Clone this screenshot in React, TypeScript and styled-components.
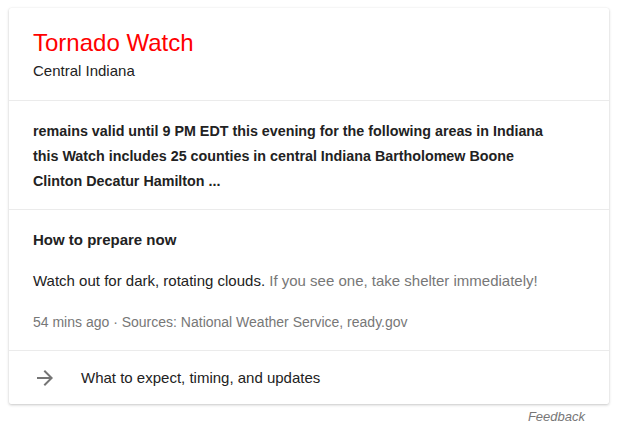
import React from "react";
import styled, { createGlobalStyle } from "styled-components";

const Global = createGlobalStyle`
  html, body { margin: 0; padding: 0; background: #fff; }
  body { font-family: "Liberation Sans", Arial, sans-serif; color: #222; }
`;

const Page = styled.div`
  padding: 8px 12px 0 9px;
`;

const Card = styled.div`
  width: 600px;
  background: #fff;
  border-radius: 2px;
  box-shadow: 0 1px 3px rgba(0, 0, 0, 0.22), 0 0 1px rgba(0, 0, 0, 0.08);
`;

const Section = styled.div<{ $pt: number; $pb: number }>`
  padding: ${(p) => p.$pt}px 24px ${(p) => p.$pb}px 24px;
  & + & {
    border-top: 1px solid #ebebeb;
  }
`;

const Title = styled.div`
  font-size: 24px;
  line-height: 32px;
  color: #ff0000;
`;

const Subtitle = styled.div`
  font-size: 15px;
  line-height: 20px;
  color: #222;
  margin-top: 2px;
`;

const BoldText = styled.div`
  max-width: 522px;
  font-size: 14.3px;
  line-height: 25px;
  font-weight: bold;
  color: #222;
`;

const Heading = styled.div`
  font-size: 15px;
  line-height: 20px;
  font-weight: bold;
  color: #222;
`;

const Body = styled.div`
  font-size: 15px;
  line-height: 20px;
  color: #222;
  margin-top: 21px;
`;

const Muted = styled.span`
  color: #777;
`;

const Meta = styled.div`
  font-size: 14px;
  line-height: 20px;
  color: #777;
  margin-top: 21px;
`;

const LinkRow = styled.div`
  display: flex;
  align-items: center;
  gap: 24px;
  padding: 15px 24px 14px 24px;
  border-top: 1px solid #ebebeb;
  font-size: 15px;
  line-height: 20px;
  color: #222;
`;

const IconBox = styled.span`
  display: flex;
  width: 24px;
  height: 24px;
  color: #757575;
`;

const Footer = styled.div`
  display: flex;
  justify-content: flex-end;
  padding: 4px 24px 0 0;
`;

const FeedbackLink = styled.span`
  font-size: 13px;
  line-height: 18px;
  font-style: italic;
  color: #777;
`;

export default function App() {
  return (
    <>
      <Global />
      <Page>
        <Card>
          <Section $pt={19} $pb={19}>
            <Title>Tornado Watch</Title>
            <Subtitle>Central Indiana</Subtitle>
          </Section>
          <Section $pt={18} $pb={15}>
            <BoldText>
              remains valid until 9 PM EDT this evening for the following areas in Indiana
              this Watch includes 25 counties in central Indiana Bartholomew Boone Clinton
              Decatur Hamilton ...
            </BoldText>
          </Section>
          <Section $pt={20} $pb={18}>
            <Heading>How to prepare now</Heading>
            <Body>
              Watch out for dark, rotating clouds. <Muted>If you see one, take shelter immediately!</Muted>
            </Body>
            <Meta>54 mins ago · Sources: National Weather Service, ready.gov</Meta>
          </Section>
          <LinkRow>
            <IconBox>
              <svg width="24" height="24" viewBox="0 0 24 24" fill="currentColor">
                <path d="M12 4l-1.41 1.41L16.17 11H4v2h12.17l-5.58 5.59L12 20l8-8z" />
              </svg>
            </IconBox>
            <span>What to expect, timing, and updates</span>
          </LinkRow>
        </Card>
        <Footer>
          <FeedbackLink>Feedback</FeedbackLink>
        </Footer>
      </Page>
    </>
  );
}
